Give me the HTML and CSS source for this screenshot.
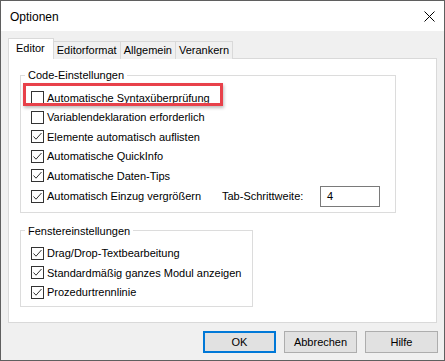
FILE: index.html
```html
<!DOCTYPE html>
<html lang="de">
<head>
<meta charset="utf-8">
<title>Optionen</title>
<link rel="stylesheet" href="styles.css">
</head>
<body>
<div class="window">
  <div class="titlebar">
    <span class="title">Optionen</span>
    <svg class="close" width="11" height="11" viewBox="0 0 11 11"><path d="M0.5 0.5 L10.5 10.5 M10.5 0.5 L0.5 10.5" stroke="#000" stroke-width="1" fill="none"/></svg>
  </div>
  <div class="client">
    <div class="tabs">
      <div class="tab selected">Editor</div>
      <div class="tab">Editorformat</div>
      <div class="tab">Allgemein</div>
      <div class="tab">Verankern</div>
    </div>
    <div class="panel">
      <fieldset class="group group-code">
        <legend>Code-Einstellungen</legend>
        <div class="row"><span class="cb"></span><span class="lbl">Automatische Syntaxüberprüfung</span></div>
        <div class="row"><span class="cb"></span><span class="lbl">Variablendeklaration erforderlich</span></div>
        <div class="row"><span class="cb checked"><svg viewBox="0 0 11 11" width="11" height="11"><polyline points="1.5,5.5 4,8.2 9.5,2" /></svg></span><span class="lbl">Elemente automatisch auflisten</span></div>
        <div class="row"><span class="cb checked"><svg viewBox="0 0 11 11" width="11" height="11"><polyline points="1.5,5.5 4,8.2 9.5,2" /></svg></span><span class="lbl">Automatische QuickInfo</span></div>
        <div class="row"><span class="cb checked"><svg viewBox="0 0 11 11" width="11" height="11"><polyline points="1.5,5.5 4,8.2 9.5,2" /></svg></span><span class="lbl">Automatische Daten-Tips</span></div>
        <div class="row row-tab">
          <span class="check-part"><span class="cb checked"><svg viewBox="0 0 11 11" width="11" height="11"><polyline points="1.5,5.5 4,8.2 9.5,2" /></svg></span><span class="lbl">Automatisch Einzug vergrößern</span></span>
          <span class="tab-label">Tab-Schrittweite:</span>
          <span class="input">4</span>
        </div>
      </fieldset>
      <fieldset class="group group-window">
        <legend>Fenstereinstellungen</legend>
        <div class="row"><span class="cb checked"><svg viewBox="0 0 11 11" width="11" height="11"><polyline points="1.5,5.5 4,8.2 9.5,2" /></svg></span><span class="lbl">Drag/Drop-Textbearbeitung</span></div>
        <div class="row"><span class="cb checked"><svg viewBox="0 0 11 11" width="11" height="11"><polyline points="1.5,5.5 4,8.2 9.5,2" /></svg></span><span class="lbl">Standardmäßig ganzes Modul anzeigen</span></div>
        <div class="row"><span class="cb checked"><svg viewBox="0 0 11 11" width="11" height="11"><polyline points="1.5,5.5 4,8.2 9.5,2" /></svg></span><span class="lbl">Prozedurtrennlinie</span></div>
      </fieldset>
      <div class="highlight"></div>
    </div>
    <div class="buttons">
      <div class="btn default">OK</div>
      <div class="btn">Abbrechen</div>
      <div class="btn">Hilfe</div>
    </div>
  </div>
</div>
</body>
</html>
```
FILE: styles.css
```css
html, body {
  margin: 0;
  padding: 0;
  background: #f0f0f0;
}
body {
  font-family: "Liberation Sans", Arial, sans-serif;
  font-size: 11px;
  color: #000;
}
.window {
  width: 445px;
  height: 361px;
  box-sizing: border-box;
  border: 1px solid #5f5f5f;
  display: flex;
  flex-direction: column;
  background: #f0f0f0;
}
.titlebar {
  height: 30px;
  background: #fff;
  display: flex;
  align-items: center;
  justify-content: space-between;
  padding: 0 9px 0 9px;
  flex: none;
}
.title {
  font-size: 12px;
  position: relative;
  top: 1px;
}
.close {
  display: block;
  margin-top: 1px;
}
.client {
  flex: 1;
  padding: 7px 0 0 7px;
  display: flex;
  flex-direction: column;
}
.tabs {
  display: flex;
  align-items: flex-end;
  height: 21px;
  margin-bottom: -1px;
  position: relative;
  z-index: 1;
}
.tab {
  height: 18px;
  box-sizing: border-box;
  border: 1px solid #d9d9d9;
  border-bottom: none;
  margin-left: -1px;
  padding: 0 3px;
  line-height: 17px;
  background: #f0f0f0;
}
.tab.selected {
  height: 21px;
  margin-left: 0;
  background: #fff;
  padding: 0 8px 0 7px;
  line-height: 19px;
  margin-right: 0;
}
.panel {
  width: 429px;
  height: 265px;
  box-sizing: border-box;
  border: 1px solid #d9d9d9;
  background: #fff;
  padding: 8px 0 0 11px;
  position: relative;
}
.group {
  margin: 0;
  border: 1px solid #dcdcdc;
  padding: 5px 0 5px 10px;
  box-sizing: border-box;
}
.group legend {
  padding: 0 3px;
  margin-left: -6px;
  line-height: 16px;
}
.group-code {
  width: 376px;
}
.group-window {
  width: 233px;
  margin-top: 10px;
  padding-bottom: 4px;
}
.row {
  height: 19.5px;
  display: flex;
  align-items: center;
}
.row-tab {
  height: 21px;
}
.check-part {
  display: flex;
  align-items: center;
  width: 191px;
}
.cb {
  width: 13px;
  height: 13px;
  box-sizing: border-box;
  border: 1px solid #333;
  background: #fff;
  margin-right: 3px;
  flex: none;
  display: flex;
}
.cb svg {
  display: block;
}
.cb polyline {
  fill: none;
  stroke: #333;
  stroke-width: 1;
}
.lbl {
  white-space: nowrap;
}
.tab-label {
  width: 98px;
  white-space: nowrap;
}
.input {
  width: 60px;
  height: 21px;
  box-sizing: border-box;
  border: 1px solid #7a7a7a;
  padding-left: 6px;
  line-height: 19px;
}
.highlight {
  position: absolute;
  left: 14px;
  top: 24px;
  width: 200px;
  height: 23px;
  box-sizing: border-box;
  border: 3px solid #e8414a;
  box-shadow: 1px 2px 3px rgba(0, 0, 0, 0.25);
}
.buttons {
  display: flex;
  justify-content: flex-end;
  gap: 8px;
  margin-top: 8px;
  padding-right: 6px;
}
.btn {
  width: 73px;
  height: 22px;
  box-sizing: border-box;
  border: 1px solid #adadad;
  background: #e1e1e1;
  text-align: center;
  line-height: 20px;
}
.btn.default {
  border: 2px solid #0078d7;
  line-height: 18px;
}
```
